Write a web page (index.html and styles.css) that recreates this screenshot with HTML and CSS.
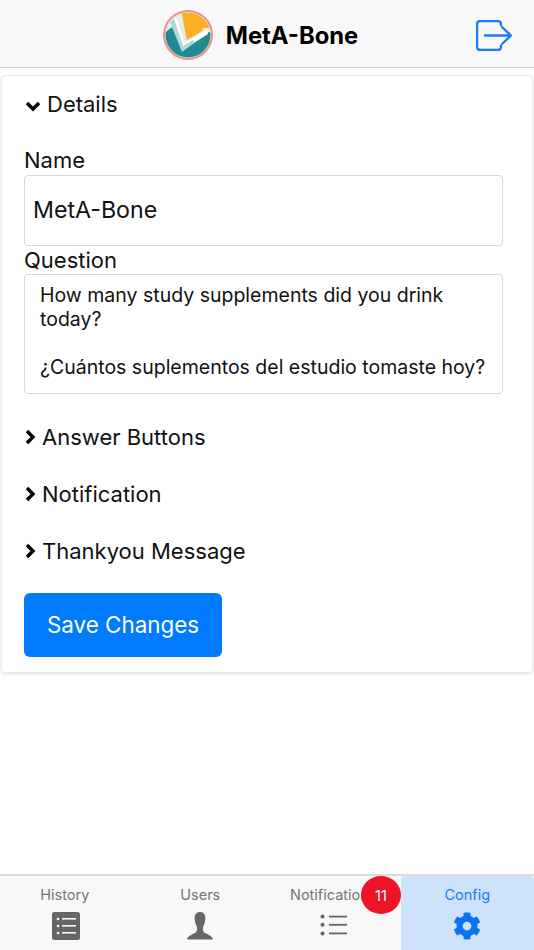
FILE: index.html
```html
<!DOCTYPE html>
<html lang="en">
<head>
<meta charset="utf-8">
<title>MetA-Bone</title>
<link rel="stylesheet" href="styles.css">
</head>
<body>
<div class="app">
  <header class="topbar">
    <div class="brand">
      <svg class="logo" viewBox="0 0 50 50" width="50" height="50">
        <defs><clipPath id="c"><circle cx="25" cy="25" r="22.5"/></clipPath></defs>
        <circle cx="25" cy="25" r="25" fill="#ef8f85"/>
        <circle cx="25" cy="25" r="23" fill="#e6ecea"/>
        <g clip-path="url(#c)">
          <path d="M0 24 L9 17 L20 38 L46 22 L50 24 V50 H0Z" fill="#228a96"/>
          <path d="M18.7 3 H38 L47 18 L40 18 L39 21 L23.7 30 Z" fill="#fbb023"/>
          <path d="M11 9 L14 8 L22 33 L44 20 L45 24 L20 40Z" fill="#fff"/>
          <path d="M7 12 L11 9 L20 36 L30 30 L31 33 L19 42Z" fill="#a9dbd0"/>
        </g>
      </svg>
      <span class="brand-name">MetA-Bone</span>
    </div>
    <svg class="logout" viewBox="0 0 36 31" width="36" height="31" fill="none" stroke="#1a7cf5" stroke-width="2.4" stroke-linecap="round" stroke-linejoin="round">
      <path d="M25 5 V4 a3 3 0 0 0-3-3 H4 a3 3 0 0 0-3 3 V27 a3 3 0 0 0 3 3 H22 a3 3 0 0 0 3-3 V26"/>
      <path d="M9 15.5 H35 M26 7 L35 15.5 L26 24"/>
    </svg>
  </header>

  <main class="content">
    <section class="card">
      <div class="section-head first">
        <svg class="chev down" viewBox="0 0 16 12" width="16" height="12"><path d="M2 3 L8 9 L14 3" fill="none" stroke="#000" stroke-width="3.4"/></svg>
        <span>Details</span>
      </div>
      <label class="field-label name-label">Name</label>
      <div class="input name-input">MetA-Bone</div>
      <label class="field-label question-label">Question</label>
      <div class="input question-input">How many study supplements did you drink today?<br><br>¿Cuántos suplementos del estudio tomaste hoy?</div>
      <div class="section-head">
        <svg class="chev" viewBox="0 0 12 16" width="12" height="16"><path d="M3 2 L9 8 L3 14" fill="none" stroke="#000" stroke-width="3.4"/></svg>
        <span>Answer Buttons</span>
      </div>
      <div class="section-head">
        <svg class="chev" viewBox="0 0 12 16" width="12" height="16"><path d="M3 2 L9 8 L3 14" fill="none" stroke="#000" stroke-width="3.4"/></svg>
        <span>Notification</span>
      </div>
      <div class="section-head">
        <svg class="chev" viewBox="0 0 12 16" width="12" height="16"><path d="M3 2 L9 8 L3 14" fill="none" stroke="#000" stroke-width="3.4"/></svg>
        <span>Thankyou Message</span>
      </div>
      <button class="save" type="button">Save Changes</button>
    </section>
  </main>

  <nav class="tabbar">
    <div class="tab history">
      <span class="tab-label">History</span>
      <svg viewBox="0 0 28 28" width="28" height="28"><rect width="28" height="28" rx="2.5" fill="#666"/><g fill="#f8f8f8"><circle cx="6" cy="7" r="1.3"/><circle cx="6" cy="14" r="1.3"/><circle cx="6" cy="21" r="1.3"/><rect x="10" y="6" width="14" height="1.6"/><rect x="10" y="13" width="14" height="1.6"/><rect x="10" y="20" width="14" height="1.6"/></g></svg>
    </div>
    <div class="tab">
      <span class="tab-label">Users</span>
      <svg viewBox="0 0 28 28" width="28" height="28"><path fill="#666" d="M14 0 C10 0 8.5 3 8.7 7 C8.9 10 9.8 13 11 15 C11.4 18.5 11 20 8 21.5 C5 23 2 24 1 27.5 H27 C26 24 23 23 20 21.5 C17 20 16.6 18.5 17 15 C18.2 13 19.1 10 19.3 7 C19.5 3 18 0 14 0Z"/></svg>
    </div>
    <div class="tab">
      <span class="tab-label notif">Notifications</span>
      <svg viewBox="0 0 28 28" width="28" height="28"><g fill="#666"><circle cx="2.5" cy="4.6" r="2"/><circle cx="2.5" cy="12.8" r="2"/><circle cx="2.5" cy="21.4" r="2"/><rect x="9" y="3.7" width="18" height="1.8"/><rect x="9" y="11.9" width="18" height="1.8"/><rect x="9" y="20.5" width="18" height="1.8"/></g></svg>
      <span class="badge">11</span>
    </div>
    <div class="tab active">
      <span class="tab-label">Config</span>
      <svg viewBox="0 0 512 512" width="28" height="28"><path fill="#0a74ee" d="M487.4 315.7l-42.6-24.6c4.3-23.2 4.3-47 0-70.2l42.6-24.6c4.9-2.8 7.1-8.6 5.5-14-11.1-35.6-30-67.8-54.7-94.6-3.8-4.1-10-5.1-14.8-2.3L380.8 110c-17.9-15.4-38.5-27.3-60.8-35.1V25.8c0-5.6-3.9-10.5-9.4-11.7-36.7-8.2-74.3-7.8-109.2 0-5.5 1.2-9.4 6.1-9.4 11.7V75c-22.2 7.9-42.8 19.8-60.8 35.1L88.7 85.5c-4.9-2.8-11-1.9-14.8 2.3-24.7 26.7-43.6 58.9-54.7 94.6-1.7 5.4.6 11.2 5.5 14L67.3 221c-4.3 23.2-4.3 47 0 70.2l-42.6 24.6c-4.9 2.8-7.1 8.6-5.5 14 11.1 35.6 30 67.8 54.7 94.6 3.8 4.1 10 5.1 14.8 2.3l42.6-24.6c17.9 15.4 38.5 27.3 60.8 35.1v49.2c0 5.6 3.9 10.5 9.4 11.7 36.7 8.2 74.3 7.8 109.2 0 5.5-1.2 9.4-6.1 9.4-11.7v-49.2c22.2-7.9 42.8-19.8 60.8-35.1l42.6 24.6c4.9 2.8 11 1.9 14.8-2.3 24.7-26.7 43.6-58.9 54.7-94.6 1.5-5.5-.7-11.3-5.6-14.1zM256 336c-44.1 0-80-35.9-80-80s35.9-80 80-80 80 35.9 80 80-35.9 80-80 80z"/></svg>
    </div>
  </nav>
</div>
</body>
</html>
```
FILE: styles.css
```css
* { box-sizing: border-box; }
html, body { margin: 0; padding: 0; height: 100%; }
body { font-family: Inter, "Liberation Sans", sans-serif; color: #111; background: #fff; }
.app { width: 534px; height: 950px; display: flex; flex-direction: column; overflow: hidden; }

.topbar {
  height: 68px; flex: none; background: #f8f8f8; border-bottom: 1px solid #d2d2d2;
  display: flex; align-items: center; justify-content: center; position: relative;
}
.brand { display: flex; align-items: center; gap: 13px; margin-top: 3px; margin-right: 13px; }
.logo { display: block; }
.brand-name { font-size: 23.8px; font-weight: 700; color: #000; }
.logout { position: absolute; left: 476px; top: 20px; }

.content { flex: 1; padding: 7px 1px 0; }
.card {
  height: 598px; background: #fff; border: 1px solid #e8e8e8; border-radius: 4px;
  box-shadow: 0 1px 3px rgba(0,0,0,.12); padding: 0 29px 0 22px;
}
.section-head {
  display: flex; align-items: center; gap: 6px; height: 57px;
  font-size: 22px; color: #111;
}
.section-head .chev { flex: none; }
.section-head.first { height: 55px; }
.section-head.first .chev { margin-top: 4px; margin-left: 1px; }
.field-label { display: block; font-size: 22px; line-height: 25px; color: #111; }
.name-label { margin-top: 17px; }
.question-label { margin-top: 2px; }
.input { border: 1px solid #d8d8d8; border-radius: 4px; background: #fff; color: #111; width: 479px; }
.name-input { height: 71px; margin-top: 2px; font-size: 23.2px; display: flex; align-items: center; padding: 0 0 2px 8px; }
.question-input { height: 120px; margin-top: 1px; margin-bottom: 14px; font-size: 19.5px; line-height: 24px; padding: 8px 6px 0 15px; }

.save {
  display: block; margin-top: 14px; width: 198px; height: 64px; border: 0; border-radius: 6px; padding: 0 0 2px;
  background: #007bff; color: #fff; font: 400 22.4px Inter, "Liberation Sans", sans-serif;
}

.tabbar {
  height: 76px; flex: none; background: #f8f8f8; border-top: 2px solid #dcdcdc;
  display: grid; grid-template-columns: repeat(4, 133.5px);
}
.tab { position: relative; display: flex; flex-direction: column; align-items: center; padding-top: 10px; min-width: 0; }
.tab-label { font-size: 14.5px; line-height: 17px; color: #757575; height: 17px; margin-bottom: 9px; white-space: nowrap; }
.tab-label.notif { align-self: flex-start; margin-left: 23px; }
.history .tab-label { margin-right: 4px; }
.history svg { margin-right: 2px; }
.tab svg { display: block; flex: none; }
.tab.active { background: #cfe2fb; border-radius: 4px 4px 0 0; }
.tab.active .tab-label { color: #1a7cf5; }
.badge {
  position: absolute; left: 94px; top: 0; width: 40px; height: 38px; border-radius: 50%;
  background: #ee1427; color: #fff; font-size: 14.5px; display: flex; align-items: center; justify-content: center;
}
```
